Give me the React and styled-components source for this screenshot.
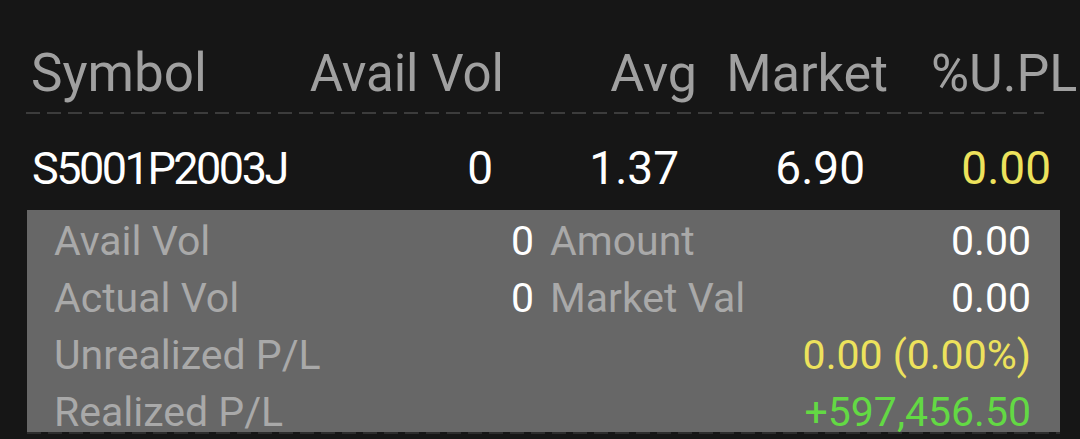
import React from 'react'
import styled, { createGlobalStyle } from 'styled-components';

const GlobalStyle = createGlobalStyle`
  html, body {
    margin: 0;
    padding: 0;
    background: #161616;
  }
  body {
    font-family: Roboto, "Noto Sans", "Liberation Sans", sans-serif;
  }
`;

const Screen = styled.div`
  width: 1080px;
  height: 439px;
  overflow: hidden;
  background: #161616;
  display: flex;
  flex-direction: column;
`;

const Row = styled.div`
  display: grid;
  grid-template-columns: ${p => p.cols};
  align-items: baseline;
  padding-top: ${p => p.top}px;
  height: ${p => p.height}px;
  flex-shrink: 0;
  box-sizing: border-box;
  white-space: nowrap;
`;

const Cell = styled.div`
  font-size: ${p => p.size}px;
  line-height: 1;
  color: ${p => p.color || '#fff'};
  text-align: ${p => p.align || 'right'};
  padding-left: ${p => p.padLeft || 0}px;
  letter-spacing: ${p => p.tight || 0}px;
`;

const Dashes = styled.div`
  height: 2px;
  flex-shrink: 0;
  margin-left: ${p => p.left}px;
  width: ${p => p.width}px;
  background-image: repeating-linear-gradient(
    to right,
    ${p => p.color} 0px,
    ${p => p.color} 14px,
    transparent 14px,
    transparent 21px
  );
`;

const Panel = styled.div`
  flex-shrink: 0;
  margin-left: 27px;
  width: 1033px;
  height: 222px;
  box-sizing: border-box;
  overflow: hidden;
  background: #676767;
  padding: 2px 29px 0 27px;
  display: grid;
  grid-template-columns: 480px 481px;
  column-gap: 16px;
  grid-auto-rows: 57px;
`;

const Pair = styled.div`
  display: flex;
  justify-content: space-between;
  align-items: center;
  font-size: 41px;
  white-space: nowrap;
`;

const Label = styled.span`
  color: #a9a9a9;
`;

const Value = styled.span`
  color: ${p => p.color || '#fff'};
  margin-left: auto;
`;

const YELLOW = '#ede25c';
const GREEN = '#63d944';
const HEAD = '#a0a0a0';

const headerCols = '300px 204px 193px 191px 192px';
const dataCols = '300px 193px 186px 186px 186px';

function App() {
  return (
    <>
      <GlobalStyle />
      <Screen>
        <Row cols={headerCols} top={47} height={112}>
          <Cell size={53} color={HEAD} align="left" padLeft={31}>Symbol</Cell>
          <Cell size={51} color={HEAD}>Avail Vol</Cell>
          <Cell size={52} color={HEAD}>Avg</Cell>
          <Cell size={52} color={HEAD}>Market</Cell>
          <Cell size={52} color={HEAD} align="left" padLeft={43}>%U.PL</Cell>
        </Row>
        <Dashes left={26} width={1018} color="#3c3c3c" />
        <Row cols={dataCols} top={31} height={96}>
          <Cell size={45} align="left" padLeft={32} tight={-2.5}>S5001P2003J</Cell>
          <Cell size={46}>0</Cell>
          <Cell size={46}>1.37</Cell>
          <Cell size={46}>6.90</Cell>
          <Cell size={46} color={YELLOW}>0.00</Cell>
        </Row>
        <Panel>
          <Pair><Label>Avail Vol</Label><Value>0</Value></Pair>
          <Pair><Label>Amount</Label><Value>0.00</Value></Pair>
          <Pair><Label>Actual Vol</Label><Value>0</Value></Pair>
          <Pair><Label>Market Val</Label><Value>0.00</Value></Pair>
          <Pair><Label>Unrealized P/L</Label></Pair>
          <Pair><Value color={YELLOW}>0.00 (0.00%)</Value></Pair>
          <Pair><Label>Realized P/L</Label></Pair>
          <Pair><Value color={GREEN}>+597,456.50</Value></Pair>
        </Panel>
        <Dashes left={27} width={1033} color="#2e2e2e" />
      </Screen>
    </>
  )
}

export default App
